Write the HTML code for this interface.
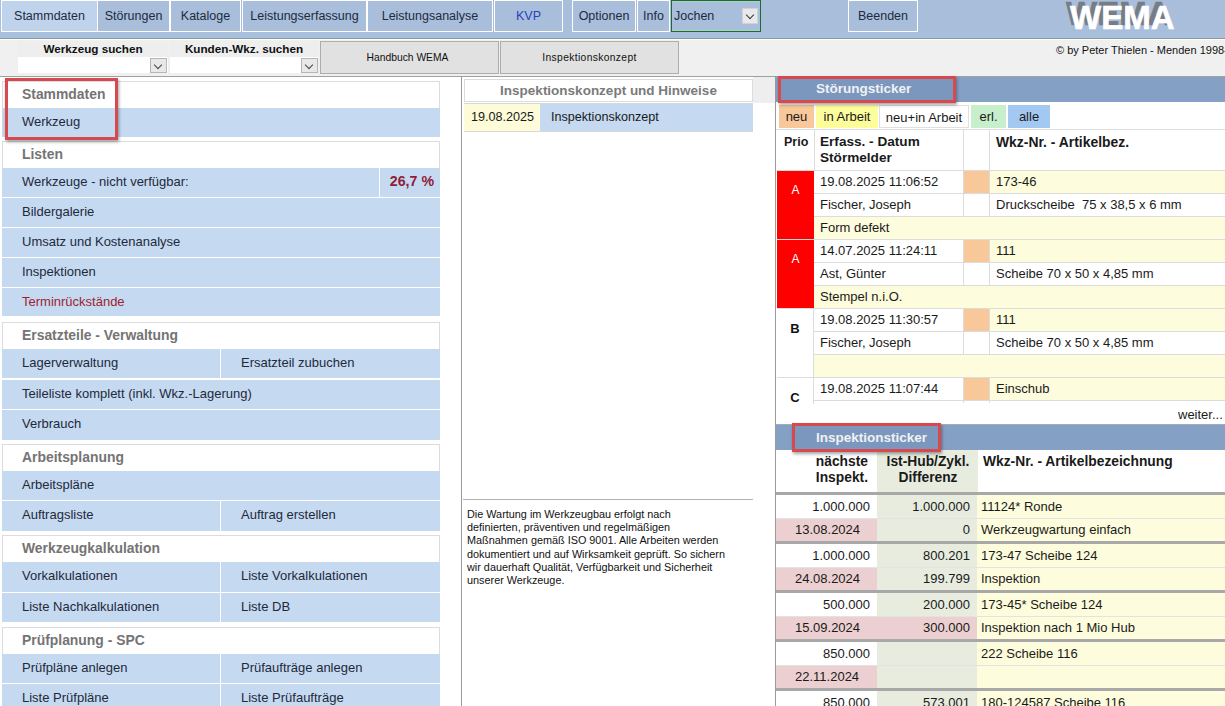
<!DOCTYPE html>
<html><head><meta charset="utf-8">
<style>
*{margin:0;padding:0;box-sizing:border-box}
html,body{width:1225px;height:706px;overflow:hidden;background:#fff;font-family:"Liberation Sans",sans-serif;color:#1a1a1a}
.a{position:absolute}
/* top bar */
#top{left:0;top:0;width:1225px;height:39px;background:#a8bedb;border-bottom:1px solid #8e97a2}
.tab{position:absolute;top:0;height:32px;border:1px solid #fff;background:#a8bedb;color:#1e2a40;font-size:12.5px;line-height:30px;text-align:center}
.tab.act{background:#bfd3ec}
#row2{left:0;top:39px;width:1225px;height:38px;background:#f0f0f0;border-top:1px solid #fff;border-bottom:1px solid #a0a0a0}
.srch{position:absolute;top:1px;height:32px;background:#fff}
.srch .lb{position:absolute;left:0;top:0;width:100%;height:16px;background:#eeeeee;font-weight:bold;font-size:11.7px;line-height:16px;text-align:center;color:#111}
.cbx{position:absolute;width:17px;height:15px;background:#e8e8e8;border:1px solid #b5b5b5}
.cbx:after{content:"";position:absolute;left:4px;top:3px;width:5px;height:5px;border-right:1.8px solid #444;border-bottom:1.8px solid #444;transform:rotate(45deg)}
.btn{position:absolute;top:1px;height:33px;background:#e1e1e1;border:1px solid #adadad;font-size:10.3px;line-height:31px;text-align:center;color:#111}
/* left menu */
.gh{position:absolute;left:2px;width:438px;height:28px;background:#fff;border:1px solid #dcdcdc;border-bottom:none;font-weight:bold;font-size:13.9px;color:#747474;padding-left:19px;line-height:24px}
.it{position:absolute;height:29px;background:#c5d9f1;font-size:13px;color:#1e2a3a;padding-left:20px;line-height:27px;white-space:nowrap}
/* right */
.bar{position:absolute;left:776px;width:449px;background:#84a0c5;color:#fff;font-weight:bold;font-size:13.5px}
.rbox{position:absolute;border:3px solid #d64a4f;box-shadow:1px 2px 3px rgba(0,0,0,.35);background:rgba(0,20,60,.06)}
.fb{position:absolute;top:105px;height:23px;font-size:13px;line-height:24px;text-align:center;color:#1a1a1a}
.c{position:absolute;font-size:13px;line-height:23px;white-space:nowrap;overflow:hidden}
.hl{position:absolute;background:#dadada}
</style></head><body>

<!-- TOP BAR -->
<div id="top" class="a">
  <div class="a" style="left:0;top:33px;width:1225px;height:5px;background:#a7c0dc"></div>
  <div class="tab act" style="left:1px;width:97px">Stammdaten</div>
  <div class="tab" style="left:97px;width:73px">Störungen</div>
  <div class="tab" style="left:170px;width:71px">Kataloge</div>
  <div class="tab" style="left:242px;width:125px">Leistungserfassung</div>
  <div class="tab" style="left:367px;width:126px">Leistungsanalyse</div>
  <div class="tab" style="left:494px;width:69px;color:#2b3fc0">KVP</div>
  <div class="tab" style="left:572px;width:64px">Optionen</div>
  <div class="tab" style="left:637px;width:33px">Info</div>
  <div class="a" style="left:671px;top:0;width:90px;height:32px;border:1px solid #1f6a32;box-shadow:inset 0 1px 0 #a9d6c4,inset 0 -1px 0 #a9d6c4;font-size:12.5px;line-height:30px;padding-left:2px;color:#1e2a40">Jochen
    <div class="a" style="left:70px;top:7px;width:16px;height:16px;background:#e9e9ec;border:1px solid #d0d2d6"></div>
    <div class="a" style="left:75px;top:11px;width:6px;height:6px;border-right:1.6px solid #3a3a3a;border-bottom:1.6px solid #3a3a3a;transform:rotate(45deg)"></div>
  </div>
  <div class="tab" style="left:848px;width:70px">Beenden</div>
  <div class="a" style="left:1066px;top:-4px;font-weight:bold;font-size:33px;line-height:36px;color:#777c85;letter-spacing:0px;-webkit-text-stroke:0.6px #777c85">WEMA</div>
  <div class="a" style="left:1070px;top:0px;font-weight:bold;font-size:33px;line-height:36px;color:#fff;letter-spacing:0px;-webkit-text-stroke:0.6px #fff">WEMA</div>
</div>

<!-- ROW 2 -->
<div id="row2" class="a">
  <div class="srch" style="left:18px;width:150px"><div class="lb">Werkzeug suchen</div><div class="cbx" style="left:132px;top:17px"></div></div>
  <div class="srch" style="left:170px;width:148px"><div class="lb">Kunden-Wkz. suchen</div><div class="cbx" style="left:131px;top:17px"></div></div>
  <div class="btn" style="left:320px;width:179px;padding-right:4px">Handbuch WEMA</div>
  <div class="btn" style="left:500px;width:179px;letter-spacing:0.35px">Inspektionskonzept</div>
  <div class="a" style="left:1056px;top:3px;font-size:11px;line-height:14px;white-space:nowrap;color:#111">© by Peter Thielen - Menden 1998-2025</div>
</div>

<!-- LEFT MENU -->
<div class="gh" style="top:81px">Stammdaten</div>
<div class="it" style="left:2px;top:108px;width:438px;height:29px;">Werkzeug</div>
<div class="gh" style="top:141px">Listen</div>
<div class="it" style="left:2px;top:168px;width:377px;height:29px;">Werkzeuge - nicht verfügbar:</div>
<div class="it" style="left:380px;top:168px;width:60px;height:29px;padding:0;text-align:right;padding-right:6px;color:#901c36;font-weight:bold;font-size:14.2px;">26,7 %</div>
<div class="it" style="left:2px;top:198px;width:438px;height:29px;">Bildergalerie</div>
<div class="it" style="left:2px;top:228px;width:438px;height:29px;">Umsatz und Kostenanalyse</div>
<div class="it" style="left:2px;top:258px;width:438px;height:29px;">Inspektionen</div>
<div class="it" style="left:2px;top:288px;width:438px;height:28px;color:#9e1f30;">Terminrückstände</div>
<div class="gh" style="top:322px">Ersatzteile - Verwaltung</div>
<div class="it" style="left:2px;top:349px;width:218px;height:29px;">Lagerverwaltung</div>
<div class="it" style="left:221px;top:349px;width:219px;height:29px;">Ersatzteil zubuchen</div>
<div class="it" style="left:2px;top:380px;width:438px;height:29px;">Teileliste komplett (inkl. Wkz.-Lagerung)</div>
<div class="it" style="left:2px;top:410px;width:438px;height:30px;">Verbrauch</div>
<div class="gh" style="top:444px">Arbeitsplanung</div>
<div class="it" style="left:2px;top:471px;width:438px;height:29px;">Arbeitspläne</div>
<div class="it" style="left:2px;top:501px;width:218px;height:30px;">Auftragsliste</div>
<div class="it" style="left:221px;top:501px;width:219px;height:30px;">Auftrag erstellen</div>
<div class="gh" style="top:535px">Werkzeugkalkulation</div>
<div class="it" style="left:2px;top:562px;width:218px;height:30px;">Vorkalkulationen</div>
<div class="it" style="left:221px;top:562px;width:219px;height:30px;">Liste Vorkalkulationen</div>
<div class="it" style="left:2px;top:593px;width:218px;height:29px;">Liste Nachkalkulationen</div>
<div class="it" style="left:221px;top:593px;width:219px;height:29px;">Liste DB</div>
<div class="gh" style="top:627px">Prüfplanung - SPC</div>
<div class="it" style="left:2px;top:654px;width:218px;height:29px;">Prüfpläne anlegen</div>
<div class="it" style="left:221px;top:654px;width:219px;height:29px;">Prüfaufträge anlegen</div>
<div class="it" style="left:2px;top:684px;width:218px;height:22px;">Liste Prüfpläne</div>
<div class="it" style="left:221px;top:684px;width:219px;height:22px;">Liste Prüfaufträge</div>

<div class="rbox" style="left:5px;top:78px;width:113px;height:62px;background:none"></div>

<!-- MIDDLE -->
<div class="a" style="left:461px;top:76px;width:1px;height:630px;background:#9a9a9a"></div>
<div class="a" style="left:464px;top:79px;width:289px;height:23px;border:1px solid #dcdcdc;text-align:center;font-weight:bold;font-size:13.5px;line-height:22px;color:#7a7a7a">Inspektionskonzept und Hinweise</div>
<div class="a" style="left:464px;top:103px;width:76px;height:29px;background:#fdfbd8;border-top:1px solid #d8d8d8;border-bottom:1px solid #d8d8d8;font-size:12.6px;line-height:27px;padding-left:7px">19.08.2025</div>
<div class="a" style="left:540px;top:103px;width:213px;height:29px;background:#c5d9f1;border-top:1px solid #d8d8d8;border-bottom:1px solid #d8d8d8;font-size:12.6px;line-height:27px;padding-left:11px">Inspektionskonzept</div>
<div class="a" style="left:753px;top:77px;width:22px;height:26px;background:#eeeeee"></div>
<div class="a" style="left:463px;top:499px;width:290px;height:1px;background:#b0b0b0"></div>
<div class="a" style="left:467px;top:508px;width:300px;font-size:10.85px;line-height:13.2px;color:#111">Die Wartung im Werkzeugbau erfolgt nach<br>definierten, präventiven und regelmäßigen<br>Maßnahmen gemäß ISO 9001. Alle Arbeiten werden<br>dokumentiert und auf Wirksamkeit geprüft. So sichern<br>wir dauerhaft Qualität, Verfügbarkeit und Sicherheit<br>unserer Werkzeuge.</div>

<!-- RIGHT -->
<div class="a" style="left:775px;top:76px;width:1px;height:630px;background:#9a9a9a"></div>
<div class="bar" style="top:77px;height:25px;line-height:23px;padding-left:40px">Störungsticker</div>

<div class="fb" style="left:779px;width:35px;background:#f8c89b">neu</div>
<div class="fb" style="left:816px;width:62px;background:#fdfd9c">in Arbeit</div>
<div class="fb" style="left:879px;width:90px;background:#fff;border:1px solid #e0e0e0">neu+in Arbeit</div>
<div class="fb" style="left:971px;width:35px;background:#c7efcb">erl.</div>
<div class="fb" style="left:1008px;width:42px;background:#a3c8f1">alle</div>

<div class="a" style="left:776px;top:129px;width:449px;height:1px;background:#dedede"></div>
<div class="a" style="left:784px;top:134px;font-weight:bold;font-size:12.5px;line-height:16px">Prio</div>
<div class="a" style="left:820px;top:134px;font-weight:bold;font-size:13.6px;line-height:16px">Erfass. - Datum<br>Störmelder</div>
<div class="a" style="left:996px;top:134px;font-weight:bold;font-size:13.9px;line-height:16px">Wkz-Nr. - Artikelbez.</div>

<div id="stoer"><div class="c" style="left:777px;top:171px;width:37px;height:68px;background:#f00;color:#fff;text-align:center;font-size:12px;line-height:16px;padding-top:11px">A</div>
<div class="c" style="left:814px;top:171px;width:149px;height:22px;background:#fff;padding-left:6px;line-height:22px">19.08.2025 11:06:52</div>
<div class="c" style="left:964px;top:171px;width:25px;height:22px;background:#f8c89b;"></div>
<div class="c" style="left:990px;top:171px;width:235px;height:22px;background:#fdfcdc;padding-left:6px;line-height:22px">173-46</div>
<div class="c" style="left:814px;top:193px;width:411px;height:1px;background:#dcdcdc;"></div>
<div class="c" style="left:814px;top:194px;width:149px;height:22px;background:#fff;padding-left:6px;line-height:22px">Fischer, Joseph</div>
<div class="c" style="left:990px;top:194px;width:235px;height:22px;background:#fff;padding-left:6px;line-height:22px">Druckscheibe&nbsp; 75 x 38,5 x 6 mm</div>
<div class="c" style="left:963px;top:171px;width:1px;height:45px;background:#dcdcdc;"></div>
<div class="c" style="left:989px;top:171px;width:1px;height:45px;background:#dcdcdc;"></div>
<div class="c" style="left:814px;top:216px;width:411px;height:1px;background:#dcdcdc;"></div>
<div class="c" style="left:814px;top:217px;width:411px;height:22px;background:#fdfcdc;padding-left:6px;line-height:22px">Form defekt</div>
<div class="c" style="left:777px;top:239px;width:448px;height:1px;background:#dcdcdc;"></div>
<div class="c" style="left:777px;top:240px;width:37px;height:68px;background:#f00;color:#fff;text-align:center;font-size:12px;line-height:16px;padding-top:11px">A</div>
<div class="c" style="left:814px;top:240px;width:149px;height:22px;background:#fff;padding-left:6px;line-height:22px">14.07.2025 11:24:11</div>
<div class="c" style="left:964px;top:240px;width:25px;height:22px;background:#f8c89b;"></div>
<div class="c" style="left:990px;top:240px;width:235px;height:22px;background:#fdfcdc;padding-left:6px;line-height:22px">111</div>
<div class="c" style="left:814px;top:262px;width:411px;height:1px;background:#dcdcdc;"></div>
<div class="c" style="left:814px;top:263px;width:149px;height:22px;background:#fff;padding-left:6px;line-height:22px">Ast, Günter</div>
<div class="c" style="left:990px;top:263px;width:235px;height:22px;background:#fff;padding-left:6px;line-height:22px">Scheibe 70 x 50 x 4,85 mm</div>
<div class="c" style="left:963px;top:240px;width:1px;height:45px;background:#dcdcdc;"></div>
<div class="c" style="left:989px;top:240px;width:1px;height:45px;background:#dcdcdc;"></div>
<div class="c" style="left:814px;top:285px;width:411px;height:1px;background:#dcdcdc;"></div>
<div class="c" style="left:814px;top:286px;width:411px;height:22px;background:#fdfcdc;padding-left:6px;line-height:22px">Stempel n.i.O.</div>
<div class="c" style="left:777px;top:308px;width:448px;height:1px;background:#dcdcdc;"></div>
<div class="c" style="left:813px;top:309px;width:1px;height:68px;background:#dcdcdc;"></div>
<div class="c" style="left:777px;top:309px;width:36px;height:68px;color:#111;text-align:center;font-weight:bold;font-size:13px;line-height:16px;padding-top:12px">B</div>
<div class="c" style="left:814px;top:309px;width:149px;height:22px;background:#fff;padding-left:6px;line-height:22px">19.08.2025 11:30:57</div>
<div class="c" style="left:964px;top:309px;width:25px;height:22px;background:#f8c89b;"></div>
<div class="c" style="left:990px;top:309px;width:235px;height:22px;background:#fdfcdc;padding-left:6px;line-height:22px">111</div>
<div class="c" style="left:814px;top:331px;width:411px;height:1px;background:#dcdcdc;"></div>
<div class="c" style="left:814px;top:332px;width:149px;height:22px;background:#fff;padding-left:6px;line-height:22px">Fischer, Joseph</div>
<div class="c" style="left:990px;top:332px;width:235px;height:22px;background:#fff;padding-left:6px;line-height:22px">Scheibe 70 x 50 x 4,85 mm</div>
<div class="c" style="left:963px;top:309px;width:1px;height:45px;background:#dcdcdc;"></div>
<div class="c" style="left:989px;top:309px;width:1px;height:45px;background:#dcdcdc;"></div>
<div class="c" style="left:814px;top:354px;width:411px;height:1px;background:#dcdcdc;"></div>
<div class="c" style="left:814px;top:355px;width:411px;height:22px;background:#fdfcdc;padding-left:6px;line-height:22px"></div>
<div class="c" style="left:777px;top:377px;width:448px;height:1px;background:#dcdcdc;"></div>
<div class="c" style="left:813px;top:378px;width:1px;height:26px;background:#dcdcdc;"></div>
<div class="c" style="left:777px;top:378px;width:36px;height:68px;color:#111;text-align:center;font-weight:bold;font-size:13px;line-height:16px;padding-top:12px">C</div>
<div class="c" style="left:814px;top:378px;width:149px;height:22px;background:#fff;padding-left:6px;line-height:22px">19.08.2025 11:07:44</div>
<div class="c" style="left:964px;top:378px;width:25px;height:22px;background:#f8c89b;"></div>
<div class="c" style="left:990px;top:378px;width:235px;height:22px;background:#fdfcdc;padding-left:6px;line-height:22px">Einschub</div>
<div class="c" style="left:814px;top:400px;width:411px;height:1px;background:#dcdcdc;"></div>
<div class="c" style="left:963px;top:378px;width:1px;height:25px;background:#dcdcdc;"></div>
<div class="c" style="left:989px;top:378px;width:1px;height:25px;background:#dcdcdc;"></div>
<div class="c" style="left:814px;top:129px;width:1px;height:42px;background:#dcdcdc;"></div>
<div class="c" style="left:963px;top:129px;width:1px;height:42px;background:#dcdcdc;"></div>
<div class="c" style="left:989px;top:129px;width:1px;height:42px;background:#dcdcdc;"></div>
<div class="c" style="left:776px;top:170px;width:449px;height:1px;background:#dcdcdc;"></div></div>

<div class="rbox" style="left:778px;top:76px;width:178px;height:27px"></div>

<div class="a" style="left:1178px;top:407px;font-size:13px;line-height:16px">weiter...</div>

<div class="bar" style="top:424px;height:26px;line-height:25px;padding-left:40px;border-top:1px solid #a3abb8">Inspektionsticker</div>
<div id="insp"><div class="c" style="left:877px;top:450px;width:101px;height:42px;background:#e7ecdf;"></div>
<div class="c" style="left:776px;top:454px;width:95px;height:16px;font-weight:bold;font-size:13.8px;line-height:16px;text-align:right;height:40px;padding-right:3px">nächste<br>Inspekt.</div>
<div class="c" style="left:877px;top:454px;width:101px;height:40px;font-weight:bold;font-size:13.8px;line-height:16px;text-align:center;padding-left:1px">Ist-Hub/Zykl.<br>Differenz</div>
<div class="c" style="left:983px;top:454px;width:242px;height:20px;font-weight:bold;font-size:13.8px;line-height:16px">Wkz-Nr. - Artikelbezeichnung</div>
<div class="c" style="left:776px;top:492px;width:449px;height:3px;background:#a8a8a8;"></div>
<div class="c" style="left:776px;top:495px;width:101px;height:23px;background:#fff;text-align:right;padding-right:7px;line-height:23px">1.000.000</div>
<div class="c" style="left:877px;top:495px;width:101px;height:23px;background:#e7ecdf;text-align:right;padding-right:8px;line-height:23px">1.000.000</div>
<div class="c" style="left:977px;top:495px;width:248px;height:23px;background:#fdfcdc;padding-left:4px;line-height:23px">11124* Ronde</div>
<div class="c" style="left:776px;top:518px;width:449px;height:1px;background:#e3e3e3;"></div>
<div class="c" style="left:776px;top:519px;width:101px;height:22px;background:#ecd0d1;padding-left:19px;line-height:21px">13.08.2024</div>
<div class="c" style="left:877px;top:519px;width:101px;height:22px;background:#e7ecdf;text-align:right;padding-right:8px;line-height:21px">0</div>
<div class="c" style="left:977px;top:519px;width:248px;height:22px;background:#fdfcdc;padding-left:4px;line-height:21px">Werkzeugwartung einfach</div>
<div class="c" style="left:776px;top:541px;width:449px;height:3px;background:#a8a8a8;"></div>
<div class="c" style="left:776px;top:544px;width:101px;height:23px;background:#fff;text-align:right;padding-right:7px;line-height:23px">1.000.000</div>
<div class="c" style="left:877px;top:544px;width:101px;height:23px;background:#e7ecdf;text-align:right;padding-right:8px;line-height:23px">800.201</div>
<div class="c" style="left:977px;top:544px;width:248px;height:23px;background:#fdfcdc;padding-left:4px;line-height:23px">173-47 Scheibe 124</div>
<div class="c" style="left:776px;top:567px;width:449px;height:1px;background:#e3e3e3;"></div>
<div class="c" style="left:776px;top:568px;width:101px;height:22px;background:#ecd0d1;padding-left:19px;line-height:21px">24.08.2024</div>
<div class="c" style="left:877px;top:568px;width:101px;height:22px;background:#e7ecdf;text-align:right;padding-right:8px;line-height:21px">199.799</div>
<div class="c" style="left:977px;top:568px;width:248px;height:22px;background:#fdfcdc;padding-left:4px;line-height:21px">Inspektion</div>
<div class="c" style="left:776px;top:590px;width:449px;height:3px;background:#a8a8a8;"></div>
<div class="c" style="left:776px;top:593px;width:101px;height:23px;background:#fff;text-align:right;padding-right:7px;line-height:23px">500.000</div>
<div class="c" style="left:877px;top:593px;width:101px;height:23px;background:#e7ecdf;text-align:right;padding-right:8px;line-height:23px">200.000</div>
<div class="c" style="left:977px;top:593px;width:248px;height:23px;background:#fdfcdc;padding-left:4px;line-height:23px">173-45* Scheibe 124</div>
<div class="c" style="left:776px;top:616px;width:449px;height:1px;background:#e3e3e3;"></div>
<div class="c" style="left:776px;top:617px;width:101px;height:22px;background:#ecd0d1;padding-left:19px;line-height:21px">15.09.2024</div>
<div class="c" style="left:877px;top:617px;width:101px;height:22px;background:#ecd0d1;text-align:right;padding-right:8px;line-height:21px">300.000</div>
<div class="c" style="left:977px;top:617px;width:248px;height:22px;background:#fdfcdc;padding-left:4px;line-height:21px">Inspektion nach 1 Mio Hub</div>
<div class="c" style="left:776px;top:639px;width:449px;height:3px;background:#a8a8a8;"></div>
<div class="c" style="left:776px;top:642px;width:101px;height:23px;background:#fff;text-align:right;padding-right:7px;line-height:23px">850.000</div>
<div class="c" style="left:877px;top:642px;width:101px;height:23px;background:#e7ecdf;text-align:right;padding-right:8px;line-height:23px"></div>
<div class="c" style="left:977px;top:642px;width:248px;height:23px;background:#fdfcdc;padding-left:4px;line-height:23px">222 Scheibe 116</div>
<div class="c" style="left:776px;top:665px;width:449px;height:1px;background:#e3e3e3;"></div>
<div class="c" style="left:776px;top:666px;width:101px;height:22px;background:#ecd0d1;padding-left:19px;line-height:21px">22.11.2024</div>
<div class="c" style="left:877px;top:666px;width:101px;height:22px;background:#e7ecdf;text-align:right;padding-right:8px;line-height:21px"></div>
<div class="c" style="left:977px;top:666px;width:248px;height:22px;background:#fdfcdc;padding-left:4px;line-height:21px"></div>
<div class="c" style="left:776px;top:688px;width:449px;height:3px;background:#a8a8a8;"></div>
<div class="c" style="left:776px;top:691px;width:101px;height:23px;background:#fff;text-align:right;padding-right:7px;line-height:23px">850.000</div>
<div class="c" style="left:877px;top:691px;width:101px;height:23px;background:#e7ecdf;text-align:right;padding-right:8px;line-height:23px">573.001</div>
<div class="c" style="left:977px;top:691px;width:248px;height:23px;background:#fdfcdc;padding-left:4px;line-height:23px">180-124587 Scheibe 116</div>
<div class="c" style="left:776px;top:714px;width:449px;height:1px;background:#e3e3e3;"></div>
<div class="c" style="left:776px;top:715px;width:101px;height:22px;background:#ecd0d1;padding-left:19px;line-height:21px"></div>
<div class="c" style="left:877px;top:715px;width:101px;height:22px;background:#e7ecdf;text-align:right;padding-right:8px;line-height:21px"></div>
<div class="c" style="left:977px;top:715px;width:248px;height:22px;background:#fdfcdc;padding-left:4px;line-height:21px"></div>
<div class="c" style="left:776px;top:737px;width:449px;height:3px;background:#a8a8a8;"></div></div>
<div class="rbox" style="left:792px;top:423px;width:149px;height:29px"></div>

</body></html>
